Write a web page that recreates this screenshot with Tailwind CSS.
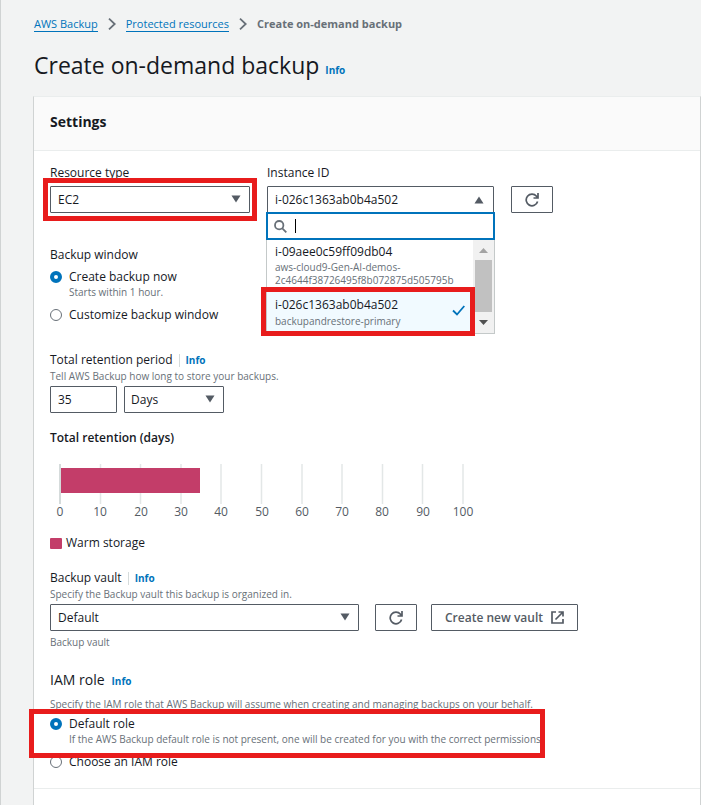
<!DOCTYPE html>
<html lang="en">
<head>
<meta charset="utf-8">
<meta name="viewport" content="width=device-width, initial-scale=1">
<title>Create on-demand backup</title>
<script src="https://cdn.jsdelivr.net/npm/@tailwindcss/browser@4"></script>
</head>
<body class="min-h-screen border-l border-[#d0d3d3] bg-[#f2f3f3] font-['Open_Sans','Noto_Sans',sans-serif] text-[12px] leading-4 text-[#16191f]">
<svg class="hidden">
  <symbol id="refresh" viewBox="0 0 14 14"><path d="M12.600 8.500A5.800 5.800 0 1 1 11.500 3.300L13 5M13 0v5H8.500" fill="none" stroke="currentColor" stroke-width="1.700"/></symbol>
  <symbol id="chevron" viewBox="0 0 8 12"><path d="M1 .7 6.700 6 1 11.300" fill="none" stroke="currentColor" stroke-width="1.800"/></symbol>
  <symbol id="caret" viewBox="0 0 10 8"><path d="M.5 .5h9L5 7.500z" fill="currentColor"/></symbol>
</svg>
<main class="flex min-h-screen flex-col pl-8">
  <nav aria-label="Breadcrumbs" class="flex items-center gap-[10px] pl-px pt-4 text-[11px] text-[#687078]">
    <a href="#" class="border-b border-[#0073bb] leading-[15px] text-[#0073bb]">AWS Backup</a>
    <svg class="h-3 w-2"><use href="#chevron"/></svg>
    <a href="#" class="border-b border-[#0073bb] leading-[15px] text-[#0073bb]">Protected resources</a>
    <svg class="h-3 w-2"><use href="#chevron"/></svg>
    <span class="font-bold" aria-current="page">Create on-demand backup</span>
  </nav>
  <header class="flex items-baseline gap-[6px] pl-px pt-[17px]">
    <h1 class="text-[23px] leading-8">Create on-demand backup</h1>
    <a href="#" class="text-[10px] font-bold text-[#0073bb]">Info</a>
  </header>

  <form class="mt-[15px] flex flex-1 flex-col border border-b-0 border-[#d0d3d3] border-t-[#eaeded] bg-white">
    <div class="border-b border-[#eaeded] bg-[#fafafa] px-4 pb-[18px] pt-[14px]">
      <h2 class="text-[14px] font-bold leading-[21px]">Settings</h2>
    </div>

    <div class="border-b border-[#eaeded] px-4 pb-[18px] pt-[14px]">
      <div class="flex items-end gap-[17px]">
        <div class="flex w-[200px] flex-col gap-[5px]">
          <label for="type">Resource type</label>
          <div class="relative">
            <select id="type" class="h-[27px] w-full appearance-none rounded-[1px] border border-[#545b64] bg-white px-[7px]"><option>EC2</option></select>
            <svg class="pointer-events-none absolute right-[9px] top-[9px] h-2 w-[10px] text-[#545b64]"><use href="#caret"/></svg>
            <div class="pointer-events-none absolute -inset-x-[7px] -inset-y-2 border-5 border-[#e81c1c]"></div>
          </div>
        </div>
        <div class="flex w-[227px] flex-col gap-[5px]">
          <label for="instance">Instance ID</label>
          <div class="relative">
            <button id="instance" type="button" aria-haspopup="listbox" aria-expanded="true" class="flex h-[27px] w-full items-center justify-between rounded-[1px] border border-[#545b64] bg-white pl-[7px] pr-[9px]">i-026c1363ab0b4a502<svg class="h-2 w-[10px] rotate-180 text-[#545b64]"><use href="#caret"/></svg></button>
            <div class="absolute -inset-x-px top-[26px] z-10">
              <div class="flex h-7 items-center border-2 border-[#0073bb] bg-white pl-[6px]">
                <svg class="h-[13px] w-[13px] text-[#687078]" viewBox="0 0 13 13"><circle cx="5.2" cy="5.2" r="4.2" fill="none" stroke="currentColor" stroke-width="1.8"/><path d="m8.3 8.3 4 4" stroke="currentColor" stroke-width="1.8"/></svg>
                <input aria-label="Filter instances" class="ml-2 min-w-0 flex-1 outline-none">
                <span class="absolute left-[29px] h-[14px] w-px bg-black"></span>
              </div>
              <div class="flex border border-t-0 border-[#c4c9c9] bg-white">
                <ul role="listbox" aria-label="Instances" class="min-w-0 flex-1">
                  <li role="option" aria-selected="false" class="px-2 pb-1 pt-1">
                    <div>i-09aee0c59ff09db04</div>
                    <div class="mt-px whitespace-nowrap text-[10px] leading-[13px] text-[#687078]">aws-cloud9-Gen-AI-demos-<br>2c4644f38726495f8b072875d505795b</div>
                  </li>
                  <li role="option" aria-selected="true" class="relative border-y border-[#99cbe4] bg-[#f1faff] px-2 pb-[3px] pt-[5px]">
                    <div>i-026c1363ab0b4a502</div>
                    <div class="text-[10px] leading-4 text-[#687078]">backupandrestore-primary</div>
                    <svg class="absolute right-2 top-[13px] h-[11px] w-[13px]" viewBox="0 0 13 11"><path d="m1 5.5 4 4L12.3 1" fill="none" stroke="#0073bb" stroke-width="1.8"/></svg>
                    <div class="pointer-events-none absolute -bottom-1 -left-[6px] -right-[2px] -top-[5px] border-5 border-[#e81c1c]"></div>
                  </li>
                </ul>
                <div aria-hidden="true" class="flex w-[21px] flex-col items-center bg-[#f1f1f1] pb-2 pt-2">
                  <svg class="h-[5px] w-[9px]" viewBox="0 0 9 5"><path d="M0 5h9L4.500 0z" fill="#a3a3a3"/></svg>
                  <div class="mb-2 mt-[7px] w-[17px] flex-1 bg-[#c1c1c1]"></div>
                  <svg class="h-[5px] w-[9px]" viewBox="0 0 9 5"><path d="M0 0h9L4.500 5z" fill="#505050"/></svg>
                </div>
              </div>
            </div>
          </div>
        </div>
        <button type="button" aria-label="Refresh instances" class="flex h-[27px] w-[42px] items-center justify-center rounded-[1px] border border-[#545b64] bg-white text-[#545b64]"><svg class="h-[14px] w-[14px]"><use href="#refresh"/></svg></button>
      </div>

      <fieldset class="mt-[34px]">
        <legend class="leading-4">Backup window</legend>
        <div class="mt-[6px] flex gap-[7px]">
          <input id="now" name="window" type="radio" checked class="mt-[2px] size-3 shrink-0 appearance-none rounded-full border border-[#687078] bg-white checked:border-4 checked:border-[#0073bb]">
          <label for="now">Create backup now<span class="block text-[10px] leading-[14px] text-[#687078]">Starts within 1 hour.</span></label>
        </div>
        <div class="mt-2 flex gap-[7px]">
          <input id="custom" name="window" type="radio" class="mt-[2px] size-3 shrink-0 appearance-none rounded-full border border-[#687078] bg-white checked:border-4 checked:border-[#0073bb]">
          <label for="custom">Customize backup window</label>
        </div>
      </fieldset>

      <div class="mt-[29px]">
        <div class="flex items-center"><label for="period">Total retention period</label><a href="#" class="ml-[6px] border-l border-[#d5dbdb] pl-[6px] text-[10px] font-bold leading-[13px] text-[#0073bb]">Info</a></div>
        <p class="mt-px text-[10px] leading-[14px] text-[#687078]">Tell AWS Backup how long to store your backups.</p>
        <div class="mt-[3px] flex gap-[7px]">
          <input id="period" value="35" class="h-[27px] w-[67px] rounded-[1px] border border-[#545b64] px-[7px]">
          <div class="relative w-[100px]">
            <select aria-label="Retention unit" class="h-[27px] w-full appearance-none rounded-[1px] border border-[#545b64] bg-white px-[6px]"><option>Days</option></select>
            <svg class="pointer-events-none absolute right-[9px] top-[9px] h-2 w-[10px] text-[#545b64]"><use href="#caret"/></svg>
          </div>
        </div>
      </div>

      <h3 class="mt-[17px] font-semibold">Total retention (days)</h3>
      <svg role="img" aria-label="Warm storage: 35 days" class="mt-[18px] h-14 w-[430px] max-w-full text-[12px]" viewBox="0 0 430 56">
        <path d="M50.500 0v40M90.500 0v40M131 0v40M171 0v40M211.500 0v40M252 0v40M292 0v40M332.500 0v40M372.500 0v40M413 0v40" stroke="#e3e7e7" stroke-width="1.500"/>
        <path d="M10 0v40" stroke="#d5dbdb" stroke-width="2"/>
        <rect x="11" y="4" width="139" height="25" fill="#c33d69"/>
        <g fill="#545b64" text-anchor="middle">
          <text x="10" y="52">0</text><text x="50" y="52">10</text><text x="91" y="52">20</text><text x="131" y="52">30</text><text x="171" y="52">40</text><text x="212" y="52">50</text><text x="252" y="52">60</text><text x="292" y="52">70</text><text x="332" y="52">80</text><text x="373" y="52">90</text><text x="413" y="52">100</text>
        </g>
      </svg>
      <div class="mt-[15px] flex items-center gap-1"><span class="h-[11px] w-3 rounded-[1px] bg-[#c33d69]"></span>Warm storage</div>

      <div class="mt-[19px]">
        <div class="flex items-center"><label for="vault">Backup vault</label><a href="#" class="ml-[6px] border-l border-[#d5dbdb] pl-[6px] text-[10px] font-bold leading-[13px] text-[#0073bb]">Info</a></div>
        <p class="mt-px text-[10px] leading-[14px] text-[#687078]">Specify the Backup vault this backup is organized in.</p>
        <div class="mt-[3px] flex">
          <div class="relative w-[309px]">
            <select id="vault" class="h-[27px] w-full appearance-none rounded-[1px] border border-[#545b64] bg-white px-[7px]"><option>Default</option></select>
            <svg class="pointer-events-none absolute right-[9px] top-[9px] h-2 w-[10px] text-[#545b64]"><use href="#caret"/></svg>
          </div>
          <button type="button" aria-label="Refresh vaults" class="ml-4 flex h-[27px] w-[42px] items-center justify-center rounded-[1px] border border-[#545b64] bg-white text-[#545b64]"><svg class="h-[14px] w-[14px]"><use href="#refresh"/></svg></button>
          <button type="button" class="ml-[14px] flex h-[27px] w-[147px] items-center justify-center gap-2 whitespace-nowrap rounded-[1px] border border-[#545b64] bg-white font-semibold text-[#545b64]">Create new vault<svg class="h-[13px] w-[13px] shrink-0" viewBox="0 0 13 13" fill="none" stroke="currentColor" stroke-width="1.700"><path d="M5 1H1v11h11V8M7.500 1H12v4.500M12 1 4.500 8.500"/></svg></button>
        </div>
        <p class="mt-1 text-[10px] leading-[14px] text-[#687078]">Backup vault</p>
      </div>

      <fieldset class="mt-[21px]">
        <legend class="flex items-baseline gap-[7px] text-[14px] leading-5">IAM role <a href="#" class="text-[10px] font-bold text-[#0073bb]">Info</a></legend>
        <p class="mt-[6px] text-[10px] leading-[14px] text-[#687078]">Specify the IAM role that AWS Backup will assume when creating and managing backups on your behalf.</p>
        <div class="relative mt-[5px] flex w-fit gap-[7px]">
          <input id="default-role" name="role" type="radio" checked class="mt-[2px] size-3 shrink-0 appearance-none rounded-full border border-[#687078] bg-white checked:border-4 checked:border-[#0073bb]">
          <label for="default-role">Default role<span class="block text-[10px] leading-[14px] text-[#687078]">If the AWS Backup default role is not present, one will be created for you with the correct permissions.</span></label>
          <div class="pointer-events-none absolute -bottom-3 -left-[21px] -top-[7px] z-10 w-[516px] border-5 border-[#e81c1c]"></div>
        </div>
        <div class="mt-2 flex gap-[7px]">
          <input id="choose-role" name="role" type="radio" class="mt-[2px] size-3 shrink-0 appearance-none rounded-full border border-[#687078] bg-white checked:border-4 checked:border-[#0073bb]">
          <label for="choose-role">Choose an IAM role</label>
        </div>
      </fieldset>
    </div>
  </form>
</main>
</body>
</html>
